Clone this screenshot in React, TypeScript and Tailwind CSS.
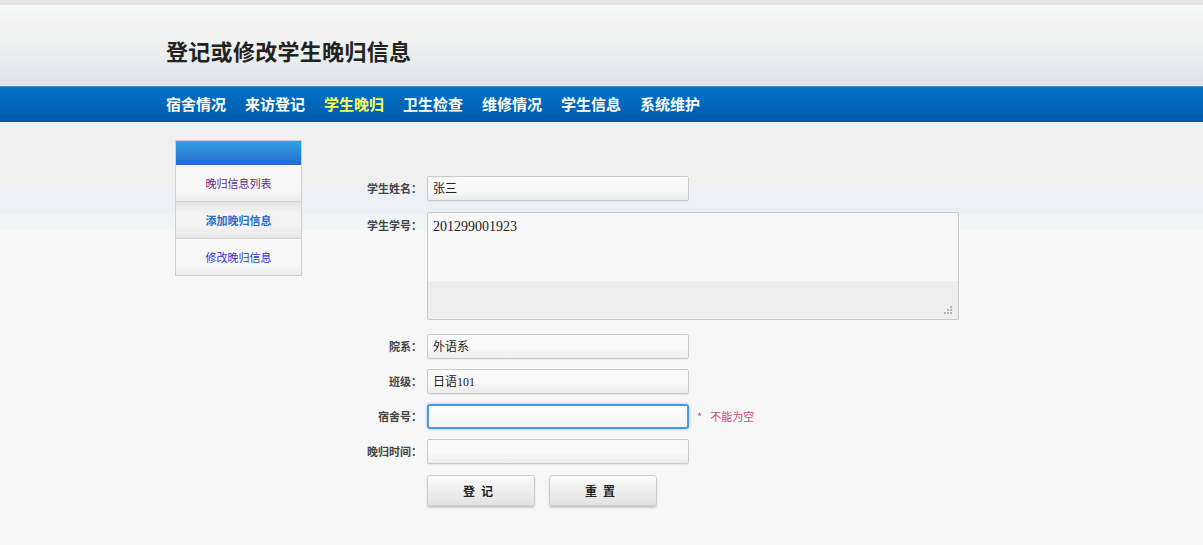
import React from 'react';

const cjk = { fontFamily: '"Noto Sans CJK SC", "Liberation Sans", sans-serif' };
const mixed = { fontFamily: '"Liberation Serif", "Noto Sans CJK SC", serif' };

const navItems = ['宿舍情况', '来访登记', '学生晚归', '卫生检查', '维修情况', '学生信息', '系统维护'];

const Field = ({ label, value, focus }: { label: string; value?: string; focus?: boolean }) => (
  <div className="flex items-center">
    <label className="w-[101px] pr-[5px] text-right text-[11px] font-bold text-[#444]">{label}</label>
    <div
      className={
        focus
          ? 'h-[25px] w-[262px] rounded-[3px] border-2 border-[#4f95e6] bg-[linear-gradient(#ffffff,#f3f3f3)] shadow-[0_0_3px_#8cbcf0]'
          : 'h-[25px] w-[262px] rounded-[2px] border border-[#cacaca] bg-[linear-gradient(#f9f9f9_0,#f9f9f9_55%,#ececec_100%)] shadow-[0_1px_1px_rgba(0,0,0,0.06)]'
      }
    >
      {value && (
        <span className="block px-[5px] pt-[4px] text-[12px] leading-[16px] text-[#222]" style={mixed}>
          {value}
        </span>
      )}
    </div>
  </div>
);

export default function App() {
  return (
    <div className="flex min-h-screen flex-col bg-[#f7f7f7]" style={cjk}>
      <div className="h-[5px] bg-[#e6e6e6]" />
      <div className="h-[81px] bg-[linear-gradient(to_bottom,#f7fbfb_0%,#f3f3f3_20%,#f1f2f2_45%,#e8eeec_65%,#e5e7ef_80%,#dde3ea_100%)] pl-[166px] pt-[33px]">
        <h1 className="text-[22px] font-bold leading-[24px] tracking-[0.3px] text-[#222]">登记或修改学生晚归信息</h1>
      </div>
      <nav className="flex h-[36px] items-center gap-[19px] border-t border-[#3d8fd6] bg-[linear-gradient(#0074c9,#0058a8)] pl-[166px]">
        {navItems.map((item) => (
          <span
            key={item}
            className={item === '学生晚归' ? 'text-[15px] font-bold text-[#ffff55]' : 'text-[15px] font-bold text-white'}
          >
            {item}
          </span>
        ))}
      </nav>

      <div className="flex flex-1 bg-[linear-gradient(to_bottom,#f0f0f0_0px,#f0f0f0_68px,#eef0f8_68px,#eef0f8_93px,#eff7f6_93px,#eff7f6_108px,#f7f7f7_108px)] pl-[175px] pt-[18px]">
        <aside className="h-[136px] w-[127px] border border-[#cfcfcf] bg-[#f7f7f7]">
          <div className="h-[24px] bg-[linear-gradient(#35a0e2,#1f6ccf)]" />
          <div className="flex h-[37px] items-center justify-center border-b border-[#d4d4d4] bg-[linear-gradient(#f8f8f8_0,#f8f8f8_70%,#ececec_100%)] text-[11px] text-[#5c2d8e]">
            晚归信息列表
          </div>
          <div className="flex h-[37px] items-center justify-center border-b border-[#d4d4d4] bg-[linear-gradient(#e4e4e4_0,#f4f4f4_30%,#f4f4f4_65%,#e6e6e6_100%)] text-[11px] font-bold text-[#2a6cc8]">
            添加晚归信息
          </div>
          <div className="flex h-[36px] items-center justify-center bg-[linear-gradient(#f8f8f8_0,#f8f8f8_70%,#ececec_100%)] text-[11px] text-[#2a34d8]">
            修改晚归信息
          </div>
        </aside>

        <form className="ml-[24px] mt-[36px] flex flex-col">
          <Field label="学生姓名：" value="张三" />

          <div className="mt-[11px] flex items-start">
            <label className="w-[101px] pr-[5px] pt-[5px] text-right text-[11px] font-bold text-[#444]">学生学号：</label>
            <div className="relative h-[108px] w-[532px] rounded-[2px] border border-[#cacaca] bg-[linear-gradient(#f8f8f8_0,#f8f8f8_64%,#eeeeee_64%,#eeeeee_100%)]">
              <span className="block px-[5px] pt-[5px] text-[14px] leading-[17px] text-[#222]" style={mixed}>
                201299001923
              </span>
              <svg className="absolute bottom-[4px] right-[5px]" width="10" height="10" viewBox="0 0 10 10">
                <rect x="7" y="1" width="2" height="2" fill="#b5b5b5" />
                <rect x="4" y="4" width="2" height="2" fill="#b5b5b5" />
                <rect x="7" y="4" width="2" height="2" fill="#b5b5b5" />
                <rect x="1" y="7" width="2" height="2" fill="#b5b5b5" />
                <rect x="4" y="7" width="2" height="2" fill="#b5b5b5" />
                <rect x="7" y="7" width="2" height="2" fill="#b5b5b5" />
              </svg>
            </div>
          </div>

          <div className="mt-[14px] flex flex-col gap-[10px]">
            <Field label="院系：" value="外语系" />
            <Field label="班级：" value="日语101" />
            <div className="flex items-center">
              <Field label="宿舍号：" focus />
              <span className="ml-[8px] text-[11px] text-[#cc4a82]">*</span>
              <span className="ml-[8px] text-[11px] text-[#cc4a82]">不能为空</span>
            </div>
            <Field label="晚归时间：" />
          </div>

          <div className="ml-[101px] mt-[11px] flex gap-[14px]">
            <button
              type="button"
              className="h-[31px] w-[108px] rounded-[3px] border border-[#cdcdcd] bg-[linear-gradient(#fbfbfb,#e2e2e2)] text-[12px] font-bold tracking-[6px] text-[#222] shadow-[0_2px_2px_rgba(0,0,0,0.18)]"
            >
              登记
            </button>
            <button
              type="button"
              className="h-[31px] w-[108px] rounded-[3px] border border-[#cdcdcd] bg-[linear-gradient(#fbfbfb,#e2e2e2)] text-[12px] font-bold tracking-[6px] text-[#222] shadow-[0_2px_2px_rgba(0,0,0,0.18)]"
            >
              重置
            </button>
          </div>
        </form>
      </div>
    </div>
  );
}
